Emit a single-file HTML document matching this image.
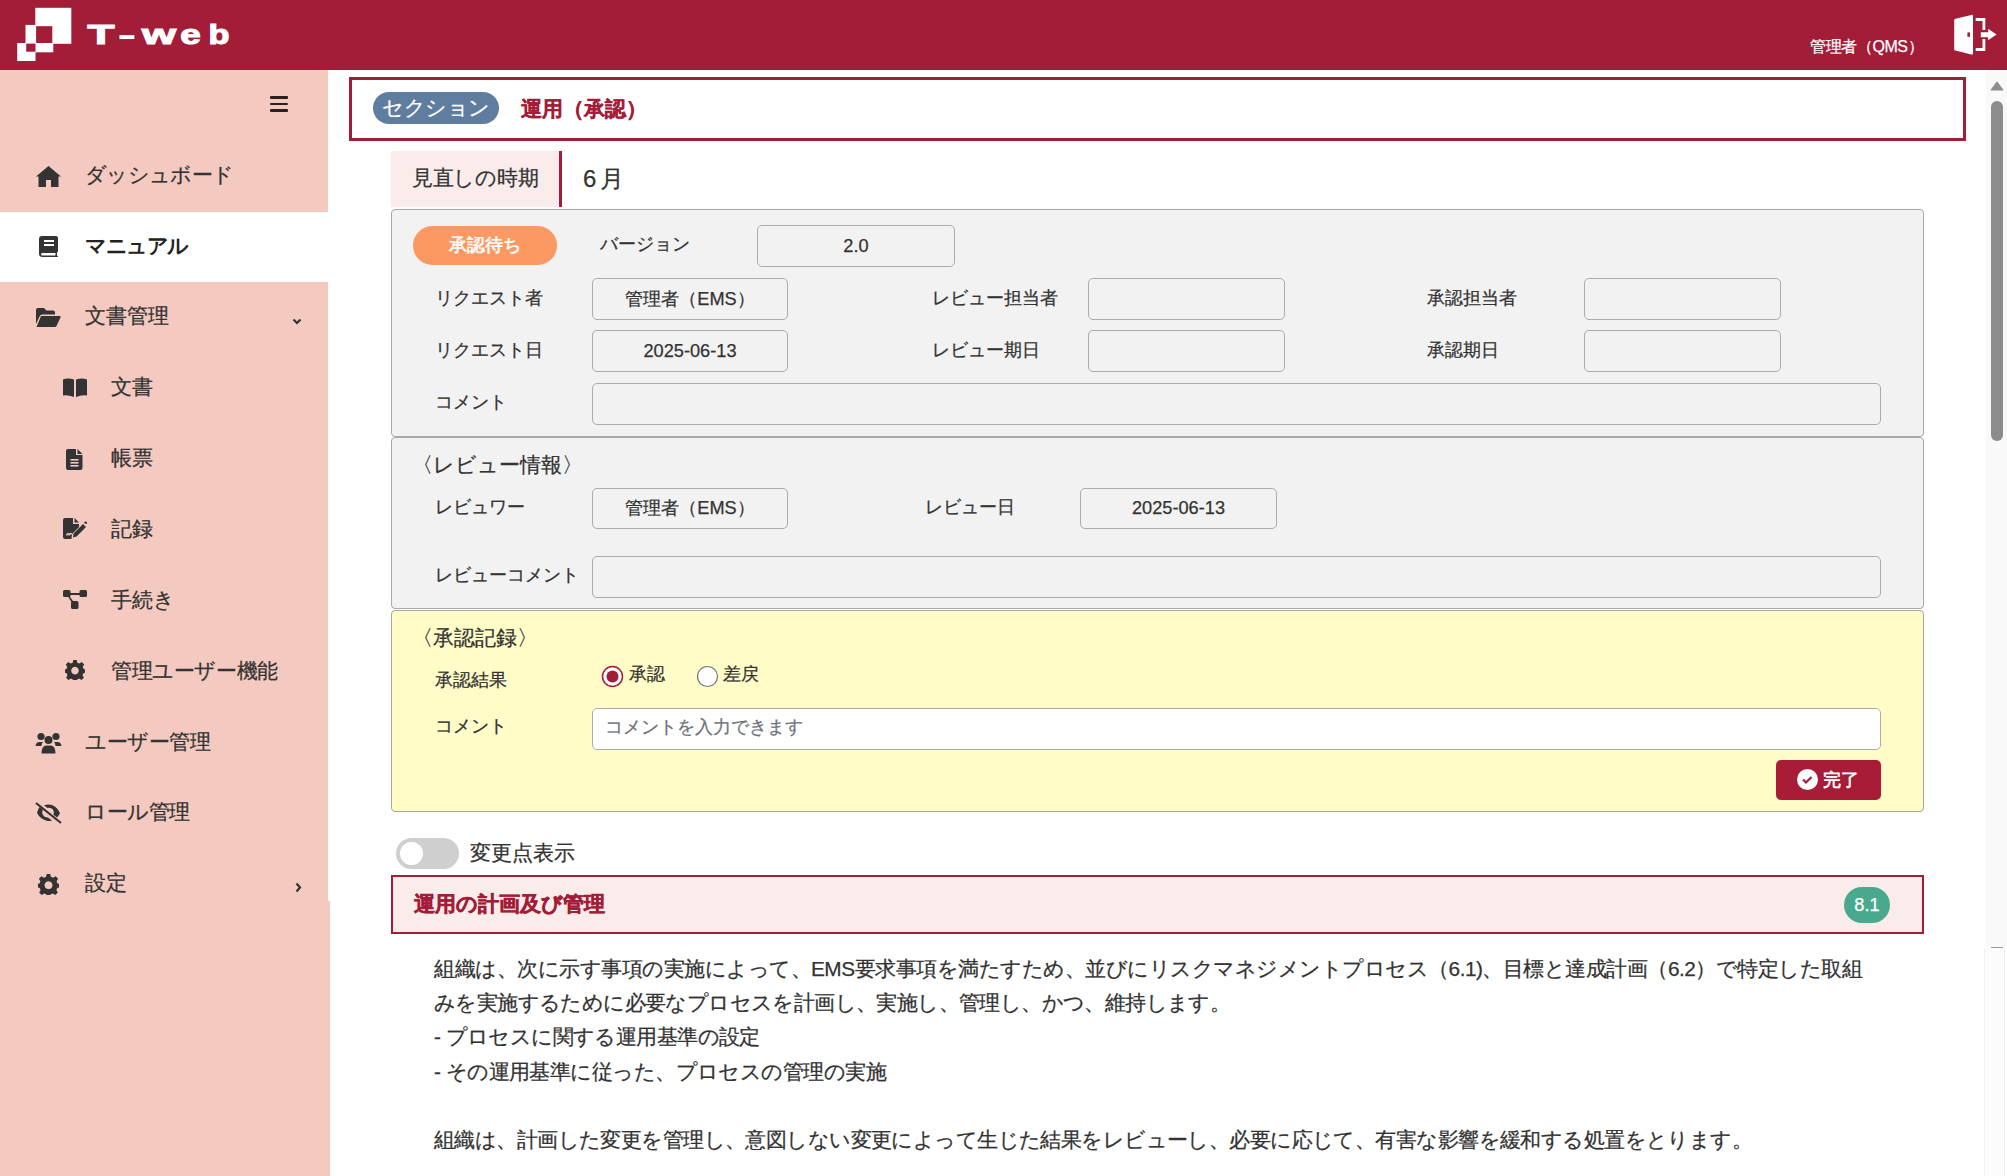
<!DOCTYPE html>
<html lang="ja">
<head>
<meta charset="utf-8">
<style>
*{box-sizing:border-box;margin:0;padding:0}
html,body{width:2007px;height:1176px;overflow:hidden;background:#fff}
body{font-family:"Liberation Sans",sans-serif;color:#333;position:relative;-webkit-text-stroke:0.25px currentColor}
.abs{position:absolute}
#hdr{position:absolute;left:0;top:0;width:2007px;height:70px;background:#a31c38}
#side{position:absolute;left:0;top:70px;width:328px;height:831px;background:#f4cac0}
#side2{position:absolute;left:0;top:901px;width:330px;height:275px;background:#f4cac0}
.nav{position:absolute;left:0;width:328px;height:70px}
.nt{position:absolute;line-height:70.86px;font-size:20.8px;color:#333;white-space:nowrap}
.navx .t{position:absolute;left:85px;top:0;line-height:70px;font-size:20.8px;color:#333;white-space:nowrap}
.nav.sub .t{left:111px}
.nav svg{position:absolute}
.box{position:absolute;border:1px solid #a8a8a8;border-radius:4px}
.inp{position:absolute;border:1px solid #acacac;border-radius:5px;background:#f2f2f2;font-size:18.2px;color:#333;text-align:center;white-space:nowrap}
.lbl{position:absolute;font-size:18.2px;color:#333;white-space:nowrap;line-height:22px}
.txt{position:absolute;left:434px;font-size:20.8px;color:#333;white-space:nowrap;line-height:34px}
</style>
</head>
<body>
<!-- header -->
<div id="hdr">
  <svg class="abs" style="left:0;top:0" width="80" height="70" viewBox="0 0 80 70">
    <g fill="#fff"><rect x="35.3" y="7.8" width="36" height="36"/><rect x="25.5" y="24.9" width="27.8" height="27.4"/><rect x="17.2" y="43" width="18.3" height="18"/></g>
    <g fill="#a31c38"><rect x="36.1" y="26.2" width="16.2" height="16.8"/><rect x="26.2" y="43.6" width="9.3" height="8.1"/></g>
  </svg>
  <svg class="abs" style="left:0;top:0" width="260" height="70" viewBox="0 0 260 70">
    <g fill="#fff" stroke="#fff" stroke-width="1.1" font-family="Liberation Sans" font-weight="bold" font-size="27.5">
      <text x="87.6" y="43.6" textLength="27" lengthAdjust="spacingAndGlyphs">T</text>
      <rect x="120" y="35.7" width="13.8" height="2.8"/>
      <text x="142" y="43.6" textLength="34" lengthAdjust="spacingAndGlyphs">w</text>
      <text x="180.2" y="43.6" textLength="20.5" lengthAdjust="spacingAndGlyphs">e</text>
      <text x="208.4" y="43.6" textLength="21" lengthAdjust="spacingAndGlyphs">b</text>
    </g>
  </svg>
  <div class="abs" style="left:1810px;top:35.5px;font-size:16px;color:#fff;line-height:22px;white-space:nowrap;letter-spacing:-0.4px">管理者（QMS）</div>
  <svg class="abs" style="left:1950px;top:12px" width="50" height="48" viewBox="0 0 50 48">
    <path fill="#fff" d="M4.2 8.2 Q4.2 7 5.4 6.8 L21.3 2.9 Q23 2.5 23 4.2 V41.3 Q23 43 21.3 42.6 L5.4 38.6 Q4.2 38.3 4.2 37.2 Z"/>
    <rect x="17.4" y="20.4" width="2.6" height="4.4" fill="#a31c38"/>
    <path fill="none" stroke="#fff" stroke-width="2.8" d="M25.7 7.5 H33.9 V18 M33.9 27 V37.5 H25.7"/>
    <path fill="#fff" d="M30.8 20.2 H38.1 V16.8 L46.6 22.5 L38.1 28.2 V25.3 H30.8 Z"/>
  </svg>
</div>

<!-- sidebar -->
<div id="side">
  <div class="abs" style="left:270px;top:26px;width:18px;height:2.6px;background:#2b1f1f;border-radius:1px"></div>
  <div class="abs" style="left:270px;top:32.6px;width:18px;height:2.4px;background:#2b1f1f;border-radius:1px"></div>
  <div class="abs" style="left:270px;top:39px;width:18px;height:2.6px;background:#2b1f1f;border-radius:1px"></div>
</div>
<div id="side2"></div>

<div id="nav">
  <div class="abs" style="left:0;top:212px;width:328px;height:70px;background:#fff"></div>
<div class="nt" style="left:85px;top:139.6px;letter-spacing:-0.65px;">ダッシュボード</div>
  <svg class="abs" style="left:36px;top:165.5px" width="25" height="21" viewBox="0 0 25 21"><path fill="#333" d="M12.5 0 L25 10.5 L22.5 10.5 L22.5 21 L15 21 L15 14 L10 14 L10 21 L2.5 21 L2.5 10.5 L0 10.5 Z"/></svg>
  
<div class="nt" style="left:85px;top:210.5px;font-weight:bold;color:#222;letter-spacing:-1.5px;-webkit-text-stroke:0;">マニュアル</div>
  <svg class="abs" style="left:38.5px;top:235.5px" width="20" height="22" viewBox="0 0 20 22"><path fill="#333" d="M3 0 H17 Q19 0 19 2 V15 Q19 16 18 16.5 V19.5 Q19 20 19 21 H3.5 Q0 21 0 17.5 V3 Q0 0 3 0 Z M3.2 17 Q2 17 2 18.5 Q2 19.5 3.2 19.5 H16.5 V17 Z"/><rect x="5" y="4" width="10" height="2" fill="#fff"/><rect x="5" y="8" width="10" height="2" fill="#fff"/></svg>
  
<div class="nt" style="left:85px;top:281.3px;">文書管理</div>
  <svg class="abs" style="left:36px;top:308px" width="25" height="19" viewBox="0 0 25 19"><path fill="#333" d="M0 2 Q0 0 2 0 H8 L10.5 2.5 H17 Q19 2.5 19 4.5 V6.5 H6 Q4.5 6.5 3.8 8 L0 16 Z M5 8 H24 Q25 8 24.5 9.5 L20.5 18 Q20 19 19 19 H0.5 Z"/></svg>
  <svg class="abs" style="left:292px;top:318px" width="10" height="7" viewBox="0 0 10 7"><path fill="none" stroke="#333" stroke-width="2.2" d="M1.5 1.5 L5 5 L8.5 1.5"/></svg>
<div class="nt" style="left:111px;top:352.2px;">文書</div>
  <svg class="abs" style="left:63px;top:378px" width="24" height="19" viewBox="0 0 24 19"><path fill="#333" d="M0 1.5 Q5 -0.5 11 1.5 V19 Q5 16.5 0 17.5 Z M13 1.5 Q19 -0.5 24 1.5 V17.5 Q19 16.5 13 19 Z"/></svg>
  
<div class="nt" style="left:111px;top:423.0px;">帳票</div>
  <svg class="abs" style="left:66px;top:449px" width="17" height="21" viewBox="0 0 17 21"><path fill="#333" d="M2 0 H10 V6 H16.5 V19 Q16.5 21 14.5 21 H2 Q0 21 0 19 V2 Q0 0 2 0 Z M11.5 0 L16.5 5 H11.5 Z"/><rect x="4.5" y="10" width="8" height="1.6" fill="#f4cac0"/><rect x="4.5" y="13" width="8" height="1.6" fill="#f4cac0"/><rect x="4.5" y="16" width="8" height="1.6" fill="#f4cac0"/></svg>
  
<div class="nt" style="left:111px;top:493.9px;">記録</div>
  <svg class="abs" style="left:63px;top:518px" width="24" height="22" viewBox="0 0 24 22"><path fill="#333" d="M2 0 H10 V6 H16 V9 L9 16 L8.5 21 H2 Q0 21 0 19 V2 Q0 0 2 0 Z M11.5 0 L16 4.5 H11.5 Z"/><path fill="#f4cac0" d="M3 17 Q5 13 6 16 Q7 14 9 15 L8.6 16.5 Q7 16 6 18 Q5 15 4 18 Z"/><path fill="#333" d="M10.5 15.5 L20 6 L23 9 L13.5 18.5 L10 19.5 Z M20.8 5 L22 3.8 Q23 3 24 4 V5.5 L23.8 6 Z"/></svg>
  
<div class="nt" style="left:111px;top:564.8px;">手続き</div>
  <svg class="abs" style="left:63px;top:590px" width="24" height="19" viewBox="0 0 24 19"><path fill="#333" d="M0 1.5 Q0 0 1.5 0 H6 Q7.5 0 7.5 1.5 V3 H16.5 V1.5 Q16.5 0 18 0 H22.5 Q24 0 24 1.5 V5.5 Q24 7 22.5 7 H18 Q16.5 7 16.5 5.5 V5 H7.5 V5.5 Q7.5 6.5 7 7 L10 11 H14 Q15.5 11 15.5 12.5 V17.5 Q15.5 19 14 19 H9.5 Q8 19 8 17.5 V13 Q8 12.3 8.4 12 L5.3 7 H1.5 Q0 7 0 5.5 Z"/></svg>
  
<div class="nt" style="left:111px;top:635.6px;letter-spacing:-0.4px;">管理ユーザー機能</div>
  <svg class="abs" style="left:65px;top:660px" width="20" height="20" viewBox="0 0 20 20"><path fill="#333" fill-rule="evenodd" d="M8.3 0 H11.7 L12.3 2.7 L14.4 3.6 L16.8 2.1 L19.2 4.5 L17.7 6.9 L18.6 9 L20 9.4 V12.8 L18.4 13.3 L17.5 15.3 L18.9 17.7 L16.5 20 L14.1 18.6 L12.2 19.4 L11.7 20 H8.3 L7.7 19.4 L5.9 18.6 L3.5 20 L1.1 17.7 L2.5 15.3 L1.6 13.3 L0 12.8 V9.4 L1.4 9 L2.3 6.9 L0.8 4.5 L3.2 2.1 L5.6 3.6 L7.7 2.7 Z M10 6.8 A3.8 3.8 0 1 0 10.01 6.8 Z"/></svg>
  
<div class="nt" style="left:85px;top:706.5px;letter-spacing:-0.5px;">ユーザー管理</div>
  <svg class="abs" style="left:34.5px;top:731.5px" width="27" height="22" viewBox="0 0 27 22"><circle cx="6" cy="4.5" r="3.6" fill="#333"/><circle cx="21" cy="4.5" r="3.6" fill="#333"/><circle cx="13.5" cy="8" r="4" fill="#333"/><path fill="#333" d="M0.5 14 Q1 10 4.5 10 H8 Q6.5 11.5 6.5 14 Z M26.5 14 Q26 10 22.5 10 H19 Q20.5 11.5 20.5 14 Z M6.5 21.5 Q6.5 14 11 13.5 H16 Q20.5 14 20.5 21.5 Z"/></svg>
  
<div class="nt" style="left:85px;top:777.3px;letter-spacing:-0.45px;">ロール管理</div>
  <svg class="abs" style="left:35px;top:801.5px" width="27" height="22" viewBox="0 0 27 22"><path fill="#333" d="M4.5 5 L8 7.8 Q6.5 9.5 7.5 12 Q9 15.5 13 15.5 L17 18.5 Q14 19.5 11 18.5 Q5 16.5 2 11 Q3 7.5 4.5 5 Z M9 3.5 Q11 2.5 13.5 2.5 Q21 2.5 25 11 Q24 13.5 22 15.5 L18.5 12.8 Q19.5 10 18 7.5 Q15.5 5 12.5 6 Z"/><path fill="none" stroke="#333" stroke-width="2.2" d="M1 1 L26 21"/></svg>
  
<div class="nt" style="left:85px;top:848.2px;">設定</div>
  <svg class="abs" style="left:38px;top:873.5px" width="21" height="21" viewBox="0 0 20 20"><path fill="#333" fill-rule="evenodd" d="M8.3 0 H11.7 L12.3 2.7 L14.4 3.6 L16.8 2.1 L19.2 4.5 L17.7 6.9 L18.6 9 L20 9.4 V12.8 L18.4 13.3 L17.5 15.3 L18.9 17.7 L16.5 20 L14.1 18.6 L12.2 19.4 L11.7 20 H8.3 L7.7 19.4 L5.9 18.6 L3.5 20 L1.1 17.7 L2.5 15.3 L1.6 13.3 L0 12.8 V9.4 L1.4 9 L2.3 6.9 L0.8 4.5 L3.2 2.1 L5.6 3.6 L7.7 2.7 Z M10 6.8 A3.8 3.8 0 1 0 10.01 6.8 Z"/></svg>
  <svg class="abs" style="left:294px;top:882px" width="10" height="11" viewBox="0 0 10 11"><path fill="none" stroke="#333" stroke-width="2.2" d="M2.5 1.5 L6 5.5 L2.5 9.5"/></svg>
</div>

<!-- MAIN -->
<div id="main">
  <!-- scrollbar -->
  <div class="abs" style="left:1986px;top:70px;width:21px;height:877px;background:#f9f9f9"></div>
  <div class="abs" style="left:1984px;top:948px;width:1px;height:228px;background:#f1f1f1"></div>
  <div class="abs" style="left:1985px;top:948px;width:19px;height:228px;background:#fcfcfc"></div>
  <div class="abs" style="left:2004px;top:948px;width:1px;height:228px;background:#eeeeee"></div>
  <div class="abs" style="left:1991px;top:947px;width:12px;height:1px;background:#9a9a9a"></div>
  <svg class="abs" style="left:1989px;top:80px" width="16" height="12" viewBox="0 0 16 12"><path fill="#8c8c8c" d="M8 2.2 L13.8 10 H2.2 Z" stroke="#8c8c8c" stroke-width="1.2" stroke-linejoin="round"/></svg>
  <div class="abs" style="left:1991px;top:101px;width:12px;height:340px;background:#8c8c8c;border-radius:6px"></div>

  <!-- section title box -->
  <div class="abs" style="left:349px;top:77px;width:1617px;height:64px;border:3px solid #a31c38;background:#fff"></div>
  <div class="abs" style="left:373px;top:92px;width:126px;height:32px;border-radius:16px;background:#5f7d9f;color:#fff;font-size:20.8px;line-height:32px;text-align:center;white-space:nowrap;letter-spacing:-0.5px">セクション</div>
  <div class="abs" style="left:520.5px;top:93px;line-height:32px;font-size:20.8px;font-weight:bold;color:#a31c38;white-space:nowrap;-webkit-text-stroke:0.3px #a31c38">運用（承認）</div>

  <!-- review period -->
  <div class="abs" style="left:391px;top:151px;width:168px;height:56px;background:#f9eceb"></div>
  <div class="abs" style="left:559px;top:151px;width:3px;height:56px;background:#a31c38"></div>
  <div class="abs" style="left:412px;top:150px;line-height:56px;font-size:20.8px;white-space:nowrap;letter-spacing:-0.3px">見直しの時期</div>
  <div class="abs" style="left:583px;top:151px;line-height:56px;font-size:24px;letter-spacing:4px;white-space:nowrap">6月</div>

  <!-- gray panel 1 -->
  <div class="box" style="left:391px;top:209px;width:1533px;height:228px;background:#f2f2f2"></div>
  <div class="abs" style="left:413px;top:226px;width:144px;height:39px;border-radius:20px;background:#fc9862;color:#fff;font-size:18.2px;line-height:39px;text-align:center;-webkit-text-stroke:0.6px #fff">承認待ち</div>
  <div class="lbl" style="left:600px;top:233px">バージョン</div>
  <div class="inp" style="left:757px;top:225px;width:198px;height:42px;line-height:40px">2.0</div>

  <div class="lbl" style="left:435px;top:287px">リクエスト者</div>
  <div class="inp" style="left:592px;top:278px;width:196px;height:42px;line-height:40px">管理者（EMS）</div>
  <div class="lbl" style="left:932px;top:287px">レビュー担当者</div>
  <div class="inp" style="left:1088px;top:278px;width:197px;height:42px"></div>
  <div class="lbl" style="left:1427px;top:287px">承認担当者</div>
  <div class="inp" style="left:1584px;top:278px;width:197px;height:42px"></div>

  <div class="lbl" style="left:435px;top:339px">リクエスト日</div>
  <div class="inp" style="left:592px;top:330px;width:196px;height:42px;line-height:40px">2025-06-13</div>
  <div class="lbl" style="left:932px;top:339px">レビュー期日</div>
  <div class="inp" style="left:1088px;top:330px;width:197px;height:42px"></div>
  <div class="lbl" style="left:1427px;top:339px">承認期日</div>
  <div class="inp" style="left:1584px;top:330px;width:197px;height:42px"></div>

  <div class="lbl" style="left:435px;top:391px">コメント</div>
  <div class="inp" style="left:592px;top:383px;width:1289px;height:42px"></div>

  <!-- gray panel 2 -->
  <div class="box" style="left:391px;top:437px;width:1533px;height:172px;background:#f2f2f2"></div>
  <div class="lbl" style="left:411.5px;top:453.5px;font-size:20.8px">〈レビュー情報〉</div>
  <div class="lbl" style="left:435px;top:496px">レビュワー</div>
  <div class="inp" style="left:592px;top:488px;width:196px;height:41px;line-height:39px">管理者（EMS）</div>
  <div class="lbl" style="left:925px;top:496px">レビュー日</div>
  <div class="inp" style="left:1080px;top:488px;width:197px;height:41px;line-height:39px">2025-06-13</div>
  <div class="lbl" style="left:435px;top:564px">レビューコメント</div>
  <div class="inp" style="left:592px;top:556px;width:1289px;height:42px"></div>

  <!-- yellow panel -->
  <div class="box" style="left:391px;top:610px;width:1533px;height:202px;background:#fffcc8;border-color:#a9a796"></div>
  <div class="lbl" style="left:412px;top:627px;font-size:20.8px">〈承認記録〉</div>
  <div class="lbl" style="left:435px;top:669px">承認結果</div>
  <svg class="abs" style="left:601px;top:665px" width="23" height="23" viewBox="0 0 23 23"><circle cx="11.5" cy="11.5" r="10" fill="#fff" stroke="#a31c38" stroke-width="1.5"/><circle cx="11.5" cy="11.5" r="6" fill="#a31c38"/></svg>
  <div class="lbl" style="left:629px;top:663px">承認</div>
  <svg class="abs" style="left:696px;top:665px" width="23" height="23" viewBox="0 0 23 23"><circle cx="11.5" cy="11.5" r="10" fill="#fff" stroke="#767676" stroke-width="1.2"/></svg>
  <div class="lbl" style="left:723px;top:663px">差戻</div>
  <div class="lbl" style="left:435px;top:715px">コメント</div>
  <div class="inp" style="left:592px;top:708px;width:1289px;height:42px;background:#fff;text-align:left;padding-left:12px;line-height:36px;color:#6e7479">コメントを入力できます</div>
  <div class="abs" style="left:1776px;top:760px;width:105px;height:40px;border-radius:5px;background:#a91c38"></div>
  <svg class="abs" style="left:1796px;top:768px" width="23" height="23" viewBox="0 0 23 23"><circle cx="11.5" cy="11.5" r="10.5" fill="#fff"/><path d="M7 11.5 L10 14.5 L15.5 9" fill="none" stroke="#a51c38" stroke-width="2.2"/></svg>
  <div class="abs" style="left:1823px;top:761px;line-height:38px;font-size:18.2px;color:#fff;white-space:nowrap;-webkit-text-stroke:0.6px #fff">完了</div>

  <!-- toggle -->
  <div class="abs" style="left:396px;top:838px;width:63px;height:31px;border-radius:16px;background:#cfcfcf"></div>
  <div class="abs" style="left:400px;top:842px;width:23px;height:23px;border-radius:50%;background:#fff"></div>
  <div class="abs" style="left:470px;top:836px;line-height:34px;font-size:20.8px;white-space:nowrap">変更点表示</div>

  <!-- section header -->
  <div class="abs" style="left:391px;top:875px;width:1533px;height:59px;border:2.5px solid #a31c38;background:#f9eceb"></div>
  <div class="abs" style="left:414px;top:874px;line-height:59px;font-size:20.8px;font-weight:bold;color:#a31c38;white-space:nowrap;-webkit-text-stroke:0.5px #a31c38">運用の計画及び管理</div>
  <div class="abs" style="left:1844px;top:887px;width:46px;height:36px;border-radius:18px;background:#49a98c;color:#fff;font-size:18.2px;line-height:36px;text-align:center">8.1</div>

  <!-- body text -->
  <div class="txt" style="top:952px;letter-spacing:-0.5px">組織は、次に示す事項の実施によって、EMS要求事項を満たすため、並びにリスクマネジメントプロセス（6.1)、目標と達成計画（6.2）で特定した取組</div>
  <div class="txt" style="top:986px;letter-spacing:-0.6px">みを実施するために必要なプロセスを計画し、実施し、管理し、かつ、維持します。</div>
  <div class="txt" style="top:1020px;letter-spacing:-0.58px">- プロセスに関する運用基準の設定</div>
  <div class="txt" style="top:1055px;letter-spacing:-0.55px">- その運用基準に従った、プロセスの管理の実施</div>
  <div class="txt" style="top:1123px;letter-spacing:-0.57px">組織は、計画した変更を管理し、意図しない変更によって生じた結果をレビューし、必要に応じて、有害な影響を緩和する処置をとります。</div>
</div>

</body>
</html>
